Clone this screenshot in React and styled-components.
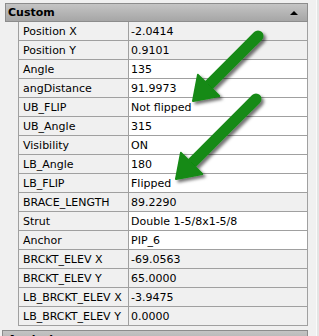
import React from 'react'
import styled, { createGlobalStyle } from 'styled-components'

const rows = [
	{ name: 'Position X', value: '-2.0414', ro: true },
	{ name: 'Position Y', value: '0.9101', ro: true },
	{ name: 'Angle', value: '135' },
	{ name: 'angDistance', value: '91.9973' },
	{ name: 'UB_FLIP', value: 'Not flipped' },
	{ name: 'UB_Angle', value: '315' },
	{ name: 'Visibility', value: 'ON' },
	{ name: 'LB_Angle', value: '180' },
	{ name: 'LB_FLIP', value: 'Flipped' },
	{ name: 'BRACE_LENGTH', value: '89.2290', ro: true },
	{ name: 'Strut', value: 'Double 1-5/8x1-5/8' },
	{ name: 'Anchor', value: 'PIP_6' },
	{ name: 'BRCKT_ELEV X', value: '-69.0563', ro: true },
	{ name: 'BRCKT_ELEV Y', value: '65.0000', ro: true },
	{ name: 'LB_BRCKT_ELEV X', value: '-3.9475', ro: true },
	{ name: 'LB_BRCKT_ELEV Y', value: '0.0000', ro: true },
]

const Arrow = ({ tail, tip }) => {
	const dx = tip[0] - tail[0]
	const dy = tip[1] - tail[1]
	const len = Math.hypot(dx, dy)
	const ux = dx / len
	const uy = dy / len
	const nx = -uy
	const ny = ux
	const hl = 22
	const hw = 15
	const bx = tip[0] - ux * hl
	const by = tip[1] - uy * hl
	const head = [
		[tip[0], tip[1]],
		[bx + nx * hw, by + ny * hw],
		[bx - nx * hw, by - ny * hw],
	].map(p => p.join(',')).join(' ')
	return (
		<g filter="url(#shadow)">
			<line x1={tail[0]} y1={tail[1]} x2={bx + ux * 2} y2={by + uy * 2} stroke="#138a13" strokeWidth="11" strokeLinecap="round" />
			<polygon points={head} fill="#138a13" stroke="#138a13" strokeWidth="2" strokeLinejoin="round" />
		</g>
	)
}

const PropertyPanel = () => (
	<Page>
		<GlobalStyle />
		<Panel>
			<Header>
				<span>Custom</span>
				<Caret />
			</Header>
			{rows.map(r => (
				<Row key={r.name}>
					<Indent />
					<Name>{r.name}</Name>
					<Value $ro={r.ro}>{r.value}</Value>
				</Row>
			))}
		</Panel>
		<NextHeader>Analysis</NextHeader>
		<Track />
		<Overlay width="319" height="336" viewBox="0 0 319 336">
			<defs>
				<filter id="shadow" x="-20%" y="-20%" width="150%" height="150%">
					<feDropShadow dx="2.5" dy="2.5" stdDeviation="1.6" floodColor="#000" floodOpacity="0.55" />
				</filter>
			</defs>
			<Arrow tail={[258, 36]} tip={[193, 101]} />
			<Arrow tail={[256, 99]} tip={[176, 179]} />
		</Overlay>
	</Page>
)

const GlobalStyle = createGlobalStyle`
	html, body {
		margin: 0;
		padding: 0;
		background: #f0f0f0;
	}
	body {
		font-family: "DejaVu Sans", "Liberation Sans", sans-serif;
		font-size: 11px;
		color: #000;
	}
`

const Page = styled.div`
	position: relative;
	width: 319px;
	height: 336px;
	overflow: hidden;
	padding-top: 3px;
	box-sizing: border-box;
`

const Panel = styled.div`
	margin-left: 5px;
	width: 303px;
	display: flex;
	flex-direction: column;
`

const Header = styled.div`
	height: 19px;
	box-sizing: border-box;
	border: 1px solid #8c8c8c;
	background: linear-gradient(#c4c4c4, #a6a6a6);
	display: flex;
	align-items: center;
	justify-content: space-between;
	padding: 0 9px 0 2px;
	font-weight: bold;
	font-size: 11px;
`

const Caret = styled.div`
	width: 0;
	height: 0;
	border-left: 4px solid transparent;
	border-right: 4px solid transparent;
	border-bottom: 4px solid #000;
`

const Row = styled.div`
	display: flex;
	height: 19px;
`

const Indent = styled.div`
	width: 13px;
	flex: none;
	border-right: 1px solid #a0a0a0;
`

const Name = styled.div`
	width: 110px;
	flex: none;
	padding-left: 4px;
	box-sizing: border-box;
	border-right: 1px solid #a0a0a0;
	border-bottom: 1px solid #a0a0a0;
	display: flex;
	align-items: center;
	background: #f0f0f0;
	white-space: nowrap;
`

const Value = styled.div`
	flex: 1;
	padding-left: 2px;
	border-right: 1px solid #a0a0a0;
	border-bottom: 1px solid #a0a0a0;
	display: flex;
	align-items: center;
	background: ${p => (p.$ro ? '#f0f0f0' : '#fff')};
	white-space: nowrap;
`

const NextHeader = styled.div`
	margin: 4px 0 0 2px;
	width: 306px;
	height: 19px;
	box-sizing: border-box;
	border: 1px solid #8c8c8c;
	background: linear-gradient(#c4c4c4, #a6a6a6);
	padding: 2px 0 0 5px;
	font-weight: bold;
`

const Track = styled.div`
	position: absolute;
	top: 0;
	right: 0;
	width: 2px;
	height: 100%;
	border-left: 1px solid #fafafa;
	background: #e4e4e4;
`

const Overlay = styled.svg`
	position: absolute;
	top: 0;
	left: 0;
	pointer-events: none;
`

export default PropertyPanel
